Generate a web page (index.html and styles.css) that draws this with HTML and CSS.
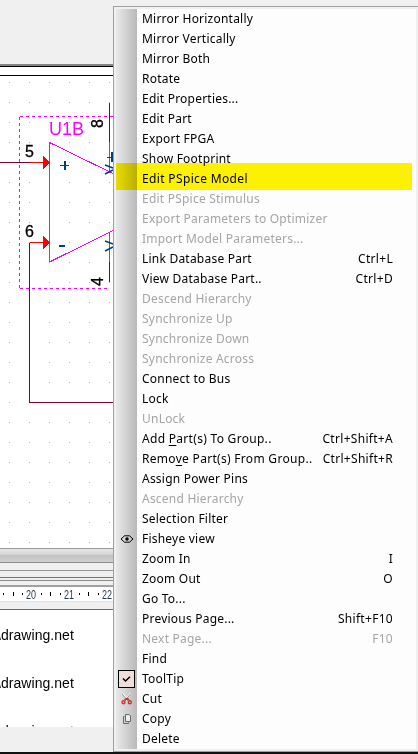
FILE: index.html
```html
<!DOCTYPE html>
<html lang="en">
<head>
<meta charset="utf-8">
<title>Schematic editor</title>
<link rel="stylesheet" href="styles.css">
</head>
<body>
<div class="app">
  <div class="toolbar"></div>
  <svg class="canvas" width="418" height="481" viewBox="0 67 418 481" shape-rendering="crispEdges">
    <defs>
      <pattern id="grid" x="9" y="82" width="20" height="20" patternUnits="userSpaceOnUse"><rect width="1" height="1" fill="#b8b8b8"/></pattern>
    </defs>
    <rect y="67" width="418" height="481" fill="#fff"/>
    <rect y="80" width="418" height="468" fill="url(#grid)"/>
    <rect y="75" width="418" height="1" fill="#000"/>
    <g fill="none" stroke="#ff00ff">
      <path d="M19.5 116.5H114M19.5 116.5V288.5M19.5 288.5H110" stroke-dasharray="3 3"/>
      <path d="M49.5 142V262"/>
      <path d="M49.5 142.5L114 174M49.5 262L114 230M109.5 142V173M109.5 232V262"/>
    </g>
    <g fill="none" stroke="#780040">
      <path d="M109.5 103V142M109.5 262V282M0 162.500H30M29.500 243V402.500H114"/>
    </g>
    <path d="M30 162.500H44M30 242.500H44" stroke="#f00"/>
    <path d="M43 156L50 162.500L43 169ZM43 236L50 242.500L43 249Z" fill="#f00"/>
    <text class="ref" x="49" y="135" textLength="35">U1B</text>
    <text class="pin" x="25" y="157">5</text>
    <text class="pin" x="25" y="237">6</text>
    <text class="pin" transform="translate(103 128) rotate(-90)">8</text>
    <text class="pin" transform="translate(103 286) rotate(-90)">4</text>
    <g fill="#004080">
      <rect x="60" y="164.500" width="9" height="1.500"/><rect x="64" y="161" width="1.500" height="9"/>
      <rect x="59" y="245" width="6" height="2"/>
      <rect x="107" y="157" width="7" height="1"/><rect x="111" y="152" width="2" height="10"/>
    </g>
    <path d="M105 165L113 168M105 174L113 170M105 241L113 244M105 251L113 247" stroke="#004080" stroke-width="1.400" shape-rendering="auto"/>
  </svg>
  <div class="scrollbar"></div>
  <div class="split split-a"></div>
  <div class="split split-b"></div>
  <div class="split split-c"></div>
  <div class="split split-d"></div>
  <svg class="ruler" width="418" height="14" viewBox="0 587 418 14">
    <path d="M3.500 593V595M13.500 592V596M22.500 593V595M41.500 593V595M50.500 592V596M60.500 593V595M79.500 593V595M88.500 592V596M98.500 593V595" stroke="#000" shape-rendering="crispEdges"/>
    <text x="26" y="598.500" textLength="10" lengthAdjust="spacingAndGlyphs">20</text>
    <text x="64" y="598.500" textLength="10" lengthAdjust="spacingAndGlyphs">21</text>
    <text x="102" y="598.500" textLength="10" lengthAdjust="spacingAndGlyphs">22</text>
  </svg>
  <div class="ruler-base"></div>
  <div class="files">
    <div class="file">\drawing.net</div>
    <div class="file">\drawing.net</div>
    <div class="file">\drawing.net</div>
  </div>
  <div class="status"></div>
</div>

<div class="menu">
  <div class="items">
    <div class="item"><i></i><span>Mirror Horizontally</span></div>
    <div class="item"><i></i><span>Mirror Vertically</span></div>
    <div class="item"><i></i><span>Mirror Both</span></div>
    <div class="item"><i></i><span>Rotate</span></div>
    <div class="item"><i></i><span>Edit Properties...</span></div>
    <div class="item"><i></i><span>Edit Part</span></div>
    <div class="item"><i></i><span>Export FPGA</span></div>
    <div class="item"><i></i><span>Show Footprint</span></div>
    <div class="item marked"><i></i><span>Edit PSpice Model</span></div>
    <div class="item off"><i></i><span>Edit PSpice Stimulus</span></div>
    <div class="item off"><i></i><span>Export Parameters to Optimizer</span></div>
    <div class="item off"><i></i><span>Import Model Parameters...</span></div>
    <div class="item"><i></i><span>Link Database Part</span><kbd>Ctrl+L</kbd></div>
    <div class="item"><i></i><span>View Database Part..</span><kbd>Ctrl+D</kbd></div>
    <div class="item off"><i></i><span>Descend Hierarchy</span></div>
    <div class="item off"><i></i><span>Synchronize Up</span></div>
    <div class="item off"><i></i><span>Synchronize Down</span></div>
    <div class="item off"><i></i><span>Synchronize Across</span></div>
    <div class="item"><i></i><span>Connect to Bus</span></div>
    <div class="item"><i></i><span>Lock</span></div>
    <div class="item off"><i></i><span>UnLock</span></div>
    <div class="item wide"><i></i><span>Add <u>P</u>art(s) To Group..</span><kbd>Ctrl+Shift+A</kbd></div>
    <div class="item wide"><i></i><span>Remo<u>v</u>e Part(s) From Group..</span><kbd>Ctrl+Shift+R</kbd></div>
    <div class="item"><i></i><span>Assign Power Pins</span></div>
    <div class="item off"><i></i><span>Ascend Hierarchy</span></div>
    <div class="item"><i></i><span>Selection Filter</span></div>
    <div class="item"><i><svg width="14" height="10" viewBox="0 0 14 10"><path d="M1 5L4.500 1.800H9.500L13 5L9.500 8.200H4.500Z" fill="none" stroke="#000"/><circle cx="7" cy="5" r="1.700" fill="#000"/></svg></i><span>Fisheye view</span></div>
    <div class="item"><i></i><span>Zoom In</span><kbd>I</kbd></div>
    <div class="item"><i></i><span>Zoom Out</span><kbd>O</kbd></div>
    <div class="item"><i></i><span>Go To...</span></div>
    <div class="item"><i></i><span>Previous Page...</span><kbd>Shift+F10</kbd></div>
    <div class="item off"><i></i><span>Next Page...</span><kbd>F10</kbd></div>
    <div class="item"><i></i><span>Find</span></div>
    <div class="item"><i><b class="check"><svg width="9" height="7" viewBox="0 0 9 7"><path d="M1 2.500L3.500 5L8 .700" fill="none" stroke="#000" stroke-width="1.500"/></svg></b></i><span>ToolTip</span></div>
    <div class="item"><i><svg width="12" height="12" viewBox="0 0 12 12"><path d="M1.500 .500L7.500 8M9.500 .500L4 8" stroke="#f4f4f4" stroke-width="2"/><path d="M1 1L7 8M9.500 1L4 8" stroke="#777" stroke-width=".8"/><path d="M3.500 7L6 5.500L8 7" stroke="#c8372d" stroke-width="1.800" fill="none"/><circle cx="2.500" cy="9.200" r="1.500" fill="none" stroke="#c8372d" stroke-width="1.400"/><circle cx="8.800" cy="9.200" r="1.500" fill="none" stroke="#c8372d" stroke-width="1.400"/></svg></i><span>Cut</span></div>
    <div class="item"><i><svg width="10" height="12" viewBox="0 0 10 12"><path d="M3.500 1.500H7L8.500 3V8.500H3.500Z" fill="#eee" stroke="#666"/><path d="M2.500 3.500H1.500V10.500H6.500V9.500" fill="none" stroke="#666"/></svg></i><span>Copy</span></div>
    <div class="item"><i></i><span>Delete</span></div>
  </div>
</div>
</body>
</html>
```
FILE: styles.css
```css
* { box-sizing: border-box; }
body { margin: 0; width: 418px; height: 754px; overflow: hidden; position: relative; background: #f0f0f0; }
svg { display: block; }
.app { display: flex; flex-direction: column; height: 754px; }
.app > * { flex: none; }
.toolbar { height: 67px; background: #f0f0f0; border-bottom: 1px solid #000; box-shadow: inset 0 -2px #858585; }
.ref { font: 18px "Liberation Sans", sans-serif; fill: #ff00ff; }
.pin { font: 16px "Liberation Sans", sans-serif; fill: #000; stroke: #000; stroke-width: .3px; }
.scrollbar { height: 15px; border-top: 1px solid #999; border-bottom: 1px solid #8c8c8c; background: linear-gradient(#e8e8e8, #d2d2d2 45%, #c2c2c2 50%, #d0d0d0); }
.split { background: #f0f0f0; }
.split-a { height: 8px; border-bottom: 1px solid #969696; }
.split-b { height: 7px; border-bottom: 1px solid #747474; }
.split-c { height: 3px; border-bottom: 1px solid #8c8c8c; }
.split-d { height: 6px; border-bottom: 2px solid #a0a0a0; }
.ruler { background: #fff; }
.ruler text { font: 12px "Liberation Sans", sans-serif; fill: #26384c; }
.ruler-base { height: 9px; background: #f0f0f0; border-top: 1px solid #e3e3e3; border-bottom: 1px solid #696969; }
.files { height: 117px; background: #fff; overflow: hidden; padding-top: 1px; }
.file { height: 48px; margin-left: -3px; font: 14px/48px "Liberation Sans", sans-serif; letter-spacing: .05px; color: #000; }
.status { height: 27px; background: #f0f0f0; border-bottom: 2px solid #111; }

.menu { position: absolute; left: 113px; top: 6px; width: 305px; height: 746px; padding: 2px; border: solid #a0a0a0; border-width: 1px 0 1px 1px; background: #f0f0f0; }
.items { height: 740px; background: linear-gradient(90deg, #e9e9e9, #b9b9b9) 0 0 / 21px 100% no-repeat #fdfdfd; }
.item { position: relative; display: flex; align-items: center; height: 20px; font: 12px/20px "Noto Sans", sans-serif; letter-spacing: .22px; color: #000; white-space: pre; }
.item i { display: flex; align-items: center; justify-content: center; width: 21px; height: 20px; margin-right: 5px; }
.item kbd { font: inherit; letter-spacing: .3px; margin-left: auto; margin-right: 23px; }
.item u { text-underline-offset: 2px; }
.wide { letter-spacing: .3px; }
.item.off { color: #a5a5a5; }
.marked { letter-spacing: .35px; }
.marked::after { content: ""; position: absolute; left: 0; top: -6px; width: 296px; height: 27px; background: #fff200; mix-blend-mode: multiply; }
.check { display: flex; align-items: center; justify-content: center; flex: none; width: 17px; height: 18px; border: 1px solid #000; background: #f2dddd; }
```
